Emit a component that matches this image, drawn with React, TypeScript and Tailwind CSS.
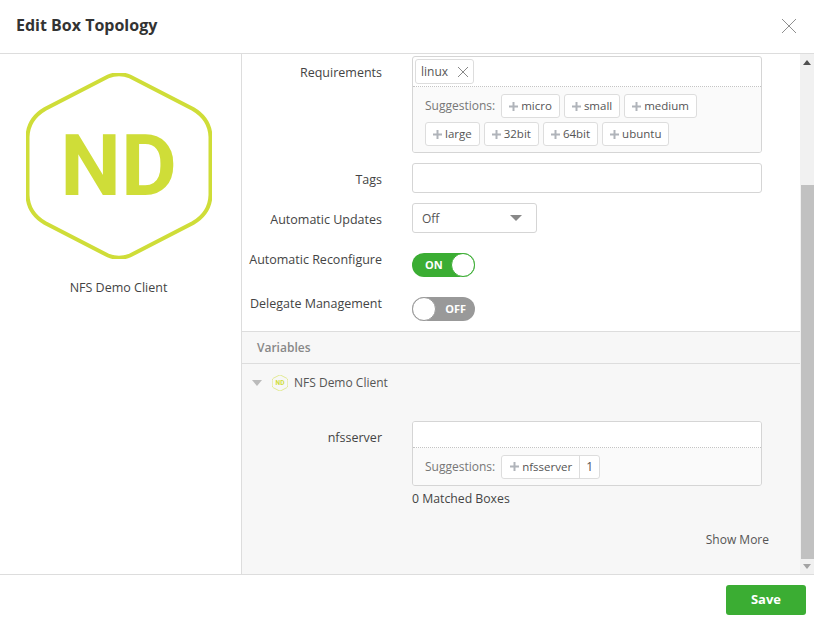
import React from 'react';

const FONT = "font-['Open_Sans',sans-serif]";

const Hexagon: React.FC<{ size: number; stroke: number; fontSize: number }> = ({ size, stroke, fontSize }) => (
  <div className="relative shrink-0" style={{ width: size, height: size }}>
    <svg viewBox="0 0 186 186" width={size} height={size} className="block">
      <path
        d="M82 3.5 Q93 -1 104 3.5 L167 36 Q184 46 184.500 64 L184.500 122 Q184 140 167 150 L104 182.500 Q93 187 82 182.500 L19 150 Q2 140 1.500 122 L1.500 64 Q2 46 19 36 Z"
        fill="none"
        stroke="#cfdd38"
        strokeWidth={stroke}
      />
    </svg>
    <div
      className="absolute inset-0 flex items-center justify-center font-['Roboto',sans-serif] font-bold text-[#cfdd38]"
      style={{ fontSize, lineHeight: 1 }}
    >
      ND
    </div>
  </div>
);

const Plus = () => (
  <svg width="9" height="9" viewBox="0 0 9 9" className="mr-[3px] shrink-0">
    <path d="M0 4.500 H9 M4.500 0 V9" stroke="#b0b4ba" strokeWidth="2" fill="none" />
  </svg>
);

const Chip: React.FC<{ label: string }> = ({ label }) => (
  <span className="flex h-6 items-center rounded-[3px] border border-[#dddddd] bg-white px-[7px] text-[11.5px] text-[#555555]">
    <Plus />
    {label}
  </span>
);

const Toggle: React.FC<{ on: boolean }> = ({ on }) => (
  <div
    className={`relative h-6 w-[63px] rounded-full text-[11px] font-bold text-white ${
      on ? 'bg-[#3bad33]' : 'bg-[#999999]'
    }`}
  >
    <span className={`absolute top-[3px] leading-[18px] ${on ? 'left-[13px]' : 'right-[9px]'}`}>{on ? 'ON' : 'OFF'}</span>
    <span
      className={`absolute top-0 h-6 w-6 rounded-full border bg-white ${
        on ? 'right-0 border-[#3bad33]' : 'left-0 border-[#999999]'
      }`}
    />
  </div>
);

const Label: React.FC<{ children: React.ReactNode; className?: string }> = ({ children, className = '' }) => (
  <div className={`w-[140px] text-right text-[12.5px] text-[#444444] ${className}`}>{children}</div>
);

const App: React.FC = () => {
  return (
    <div className={`${FONT} flex h-[625px] w-[814px] flex-col overflow-hidden bg-white text-[#444444]`}>
      {/* Header */}
      <header className="flex h-[54px] shrink-0 items-center justify-between border-b border-[#dddddd] pr-[17px] pl-[16px]">
        <h1 className="mb-[3px] text-[16px] font-bold text-[#333333]">Edit Box Topology</h1>
        <svg width="16" height="16" viewBox="0 0 16 16" className="mb-[1px]">
          <path d="M1 1 L15 15 M15 1 L1 15" stroke="#8f8f8f" strokeWidth="1" fill="none" />
        </svg>
      </header>

      {/* Body */}
      <div className="flex h-[521px] shrink-0 border-b border-[#dddddd]">
        <aside className="flex w-[242px] shrink-0 flex-col items-center border-r border-[#dddddd] pt-[19px] pr-[4px]">
          <Hexagon size={186} stroke={4} fontSize={86} />
          <div className="mt-[20px] text-[12.5px] text-[#444444]">NFS Demo Client</div>
        </aside>

        <main className="flex w-[558px] shrink-0 flex-col">
          {/* Requirements */}
          <div className="mt-[2px] flex">
            <Label className="mt-[8px]">Requirements</Label>
            <div className="ml-[30px] h-[97px] w-[350px] overflow-hidden rounded-[3px] border border-[#d5d5d5]">
              <div className="h-[30px] border-b border-dotted border-[#c4c4c4] pt-[2px] pl-[2px]">
                <span className="flex h-[25px] w-[59px] items-center justify-between rounded-[3px] border border-[#dddddd] pr-[4px] pl-[5px] text-[12px] text-[#555555]">
                  <span className="mt-[1px]">linux</span>
                  <svg width="12" height="12" viewBox="0 0 12 12">
                    <path d="M1 1 L11 11 M11 1 L1 11" stroke="#888888" strokeWidth="1" fill="none" />
                  </svg>
                </span>
              </div>
              <div className="h-[65px] bg-[#fafafa] pt-[7px] pl-[12px]">
                <div className="flex items-center gap-[4px]">
                  <span className="mr-[2px] text-[12px] text-[#777777]">Suggestions:</span>
                  <Chip label="micro" />
                  <Chip label="small" />
                  <Chip label="medium" />
                </div>
                <div className="mt-[4px] flex items-center gap-[4px]">
                  <Chip label="large" />
                  <Chip label="32bit" />
                  <Chip label="64bit" />
                  <Chip label="ubuntu" />
                </div>
              </div>
            </div>
          </div>

          {/* Tags */}
          <div className="mt-[10px] flex items-center">
            <Label className="mt-[4px]">Tags</Label>
            <div className="ml-[30px] h-[30px] w-[350px] rounded-[3px] border border-[#d5d5d5]" />
          </div>

          {/* Automatic Updates */}
          <div className="mt-[10px] flex items-center">
            <Label className="mt-[4px]">Automatic Updates</Label>
            <div className="ml-[30px] flex h-[30px] w-[125px] items-center justify-between rounded-[3px] border border-[#d5d5d5] pr-[14px] pl-[9px] text-[12px] text-[#555555]">
              <span className="mt-[1px]">Off</span>
              <span className="h-0 w-0 border-x-[6px] border-t-[6px] border-x-transparent border-t-[#888888]" />
            </div>
          </div>

          {/* Toggles */}
          <div className="mt-[20px] flex items-start">
            <Label className="-mt-[2px]">Automatic Reconfigure</Label>
            <div className="ml-[30px]">
              <Toggle on />
            </div>
          </div>
          <div className="mt-[20px] flex items-start">
            <Label className="-mt-[2px]">Delegate Management</Label>
            <div className="ml-[30px]">
              <Toggle on={false} />
            </div>
          </div>

          {/* Variables */}
          <section className="mt-[10px] flex-1 border-t border-[#dddddd] bg-[#f7f7f7]">
            <div className="flex h-[32px] items-center border-b border-[#dddddd] pl-[15px] text-[12px] font-semibold text-[#888888]">
              Variables
            </div>
            <div className="mt-[10px] flex h-[18px] items-center pl-[10px]">
              <span className="h-0 w-0 border-x-[5px] border-t-[6px] border-x-transparent border-t-[#bbbbbb]" />
              <span className="mr-[6px] ml-[10px]">
                <Hexagon size={16} stroke={6} fontSize={6.5} />
              </span>
              <span className="text-[12px] text-[#555555]">NFS Demo Client</span>
            </div>

            <div className="mt-[29px] flex">
              <Label className="mt-[8px]">nfsserver</Label>
              <div>
                <div className="ml-[30px] h-[65px] w-[350px] overflow-hidden rounded-[3px] border border-[#d5d5d5]">
                  <div className="h-[26px] border-b border-dotted border-[#c4c4c4] bg-white" />
                  <div className="flex h-[37px] items-center gap-[6px] bg-[#fafafa] pl-[12px]">
                    <span className="text-[12px] text-[#777777]">Suggestions:</span>
                    <span className="flex h-6 items-center rounded-[3px] border border-[#dddddd] bg-white text-[11.5px] text-[#555555]">
                      <span className="flex h-full items-center border-r border-[#dddddd] pr-[7px] pl-[8px]">
                        <Plus />
                        nfsserver
                      </span>
                      <span className="px-[6px] text-[12px]">1</span>
                    </span>
                  </div>
                </div>
                <div className="mt-[4px] ml-[30px] text-[12.25px] font-medium text-[#444444]">0 Matched Boxes</div>
              </div>
            </div>
            <div className="mt-[23px] pr-[31px] text-right text-[12px] text-[#555555]">Show More</div>
          </section>
        </main>

        {/* Scrollbar */}
        <div className="flex w-[14px] shrink-0 flex-col items-center bg-[#f1f1f1]">
          <div className="flex h-[17px] shrink-0 items-center">
            <span className="h-0 w-0 border-x-[4px] border-b-[5px] border-x-transparent border-b-[#505050]" />
          </div>
          <div className="mt-[114px] h-[374px] w-[13px] bg-[#c1c1c1]" />
          <div className="flex h-[15px] shrink-0 items-center">
            <span className="h-0 w-0 border-x-[4px] border-t-[5px] border-x-transparent border-t-[#a3a3a3]" />
          </div>
        </div>
      </div>

      {/* Footer */}
      <footer className="flex flex-1 items-start justify-end pt-[10px] pr-[8px]">
        <button className="flex h-[30px] w-[80px] items-center justify-center rounded-[3px] bg-[#3bad33] text-[13px] font-bold text-white">
          Save
        </button>
      </footer>
    </div>
  );
};

export default App;
